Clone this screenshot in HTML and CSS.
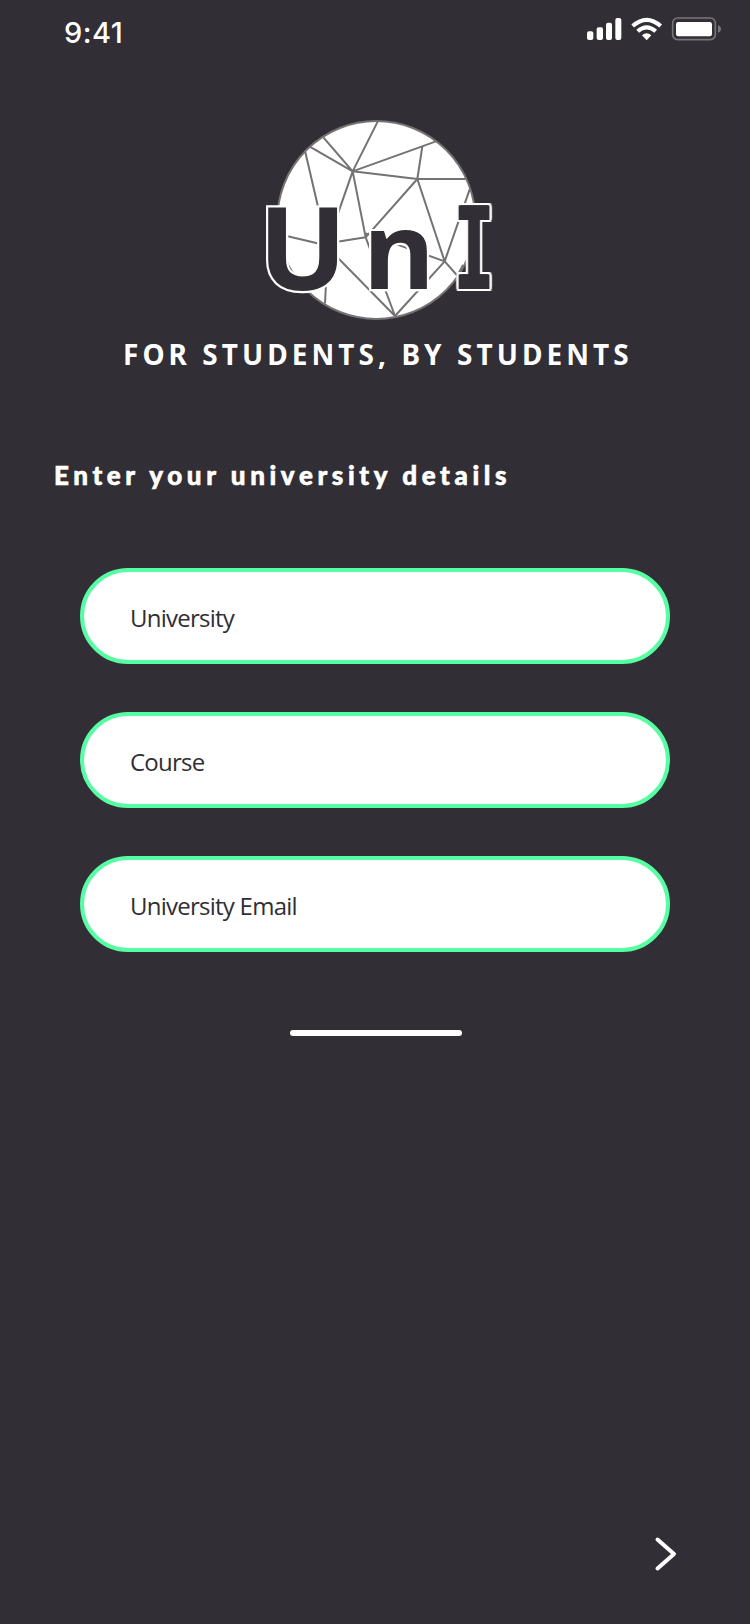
FILE: index.html
```html
<!DOCTYPE html>
<html lang="en">
<head>
<meta charset="utf-8">
<title>UnI</title>
<link rel="stylesheet" href="styles.css">
</head>
<body>
<main class="screen">
  <header class="status">
    <span class="time">9:41</span>
    <svg class="indicators" viewBox="0 0 540 180" aria-hidden="true">
      <g fill="#fff">
        <rect x="51" y="94" width="19" height="26" rx="6"/>
        <rect x="80" y="82" width="19" height="38" rx="6"/>
        <rect x="108" y="68" width="18" height="52" rx="6"/>
        <rect x="136" y="54" width="18" height="66" rx="6"/>
        <path d="M216 106Q230 94 244 106L230 121Z"/>
        <rect x="318" y="66" width="108" height="43" rx="7"/>
      </g>
      <g fill="none" stroke="#fff" stroke-width="12">
        <path d="M188 78Q230 41 272 78"/>
        <path d="M203 94Q230 70 257 94"/>
      </g>
      <rect x="308" y="54" width="128" height="65" rx="15" fill="none" stroke="#77757a" stroke-width="5"/>
      <path d="M444 76Q453 79 453 87T444 98Z" fill="#77757a"/>
    </svg>
  </header>
  <svg class="logo" viewBox="0 0 750 660" role="img" aria-label="UnI">
    <circle cx="364" cy="330" r="297" fill="#fff" stroke="#747273" stroke-width="6"/>
    <path class="mesh" d="M368 35L293 184L205 82M163 109L293 184L541 95M502 109L487 207L293 184L230 365M150 122L203 350M487 207H632M487 207L569 454L644 238M487 207L332 382L293 184M98 379L200 403L332 382M332 382L420 618L200 394M332 370L569 454L420 618M569 454L608 498M214 500L210 580"/>
    <path d="M625 465L610 494" stroke="#747273" stroke-width="8"/>
    <g class="letters">
      <text transform="translate(10 539) scale(1.015 1)" font-size="347">U</text>
      <text transform="translate(325 538) scale(1.03 1)" font-size="320">n</text>
      <text class="slab" transform="translate(657 538) scale(.58 1)" font-size="340">I</text>
    </g>
  </svg>
  <p class="tagline">FOR STUDENTS, BY STUDENTS</p>
  <h1 class="title">Enter your university details</h1>
  <form class="fields">
    <input class="field" type="text" placeholder="University">
    <input class="field" type="text" placeholder="Course">
    <input class="field" type="text" placeholder="University Email">
  </form>
  <div class="divider"></div>
  <footer class="footer">
    <svg class="next" viewBox="0 0 70 70" aria-label="Next"><path d="M27.5 19.5L44 34L27.5 48.5"/></svg>
  </footer>
</main>
</body>
</html>
```

FILE: styles.css
```css
* { box-sizing: border-box; }
body { margin: 0; background: #312e35; color: #fff; }
.screen { width: 750px; height: 1624px; display: flex; flex-direction: column; }
.status { height: 60px; display: flex; justify-content: space-between; padding-left: 64px; flex: none; }
.time { font: 500 29px/36px Inter, "Liberation Sans", sans-serif; letter-spacing: 0.5px; padding-top: 15px; }
.indicators { width: 180px; height: 60px; }
.logo { width: 250px; height: 220px; margin: 50px 0 0 255px; flex: none; overflow: visible; }
.mesh { fill: none; stroke: #747273; stroke-width: 6; stroke-linejoin: round; }
.letters { font-family: "Noto Sans", sans-serif; font-weight: 700; fill: #312e35; stroke: #fff; stroke-width: 13; paint-order: stroke; }
.slab { font-family: "DejaVu Sans Mono", monospace; text-anchor: middle; stroke: none; filter: drop-shadow(6px 0 0 #312e35) drop-shadow(-6px 0 0 #312e35) drop-shadow(9px 0 0 #fff) drop-shadow(-9px 0 0 #fff) drop-shadow(0 6px 0 #fff) drop-shadow(0 -6px 0 #fff); }
.tagline { margin: 4px 0 0 123px; font: 700 28px/40px "Noto Sans", sans-serif; letter-spacing: 4.05px; white-space: nowrap; }
.title { margin: 81px 0 0 54px; font: 900 26px/40px Lato, sans-serif; letter-spacing: 4.6px; white-space: nowrap; -webkit-text-stroke: 0.6px #fff; }
.fields { margin: 73px 80px 0; display: grid; gap: 48px; }
.field { width: 100%; height: 96px; border: 4px solid #57fda3; border-radius: 48px; background: #fff; padding: 2px 46px 0; font: 400 24px/32px "Open Sans", "Noto Sans", sans-serif; letter-spacing: -0.75px; color: #312e35; }
.field::placeholder { color: #312e35; opacity: 1; }
.divider { width: 172px; height: 6px; border-radius: 3px; background: #fff; margin: 78px 0 0 290px; flex: none; }
.footer { margin-top: auto; padding: 0 50px 34px; display: flex; justify-content: flex-end; }
.next { width: 70px; height: 70px; fill: none; stroke: #fff; stroke-width: 4; stroke-linecap: round; stroke-linejoin: round; }
```
